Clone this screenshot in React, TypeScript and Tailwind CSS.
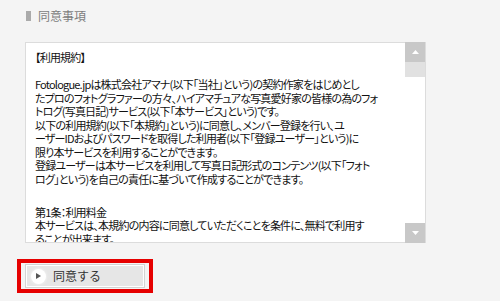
const terms: string[] = [
  "【利用規約】",
  "",
  "Fotologue.jpは株式会社アマナ(以下「当社」という)の契約作家をはじめとし",
  "たプロのフォトグラファーの方々、ハイアマチュアな写真愛好家の皆様の為のフォ",
  "トログ(写真日記)サービス(以下「本サービス」という)です。",
  "以下の利用規約(以下「本規約」という)に同意し、メンバー登録を行い、ユ",
  "ーザーIDおよびパスワードを取得した利用者(以下「登録ユーザー」という)に",
  "限り本サービスを利用することができます。",
  "登録ユーザーは本サービスを利用して写真日記形式のコンテンツ(以下「フォト",
  "ログ」という)を自己の責任に基づいて作成することができます。",
  "",
  "第1条：利用料金",
  "本サービスは、本規約の内容に同意していただくことを条件に、無料で利用す",
  "ることが出来ます。",
];

const Arrow = ({ dir }: { dir: "up" | "down" }) => (
  <svg width="7" height="4" viewBox="0 0 7 4" className="block">
    {dir === "up" ? (
      <polygon points="3.5,0 7,4 0,4" fill="#fff" />
    ) : (
      <polygon points="0,0 7,0 3.5,4" fill="#fff" />
    )}
  </svg>
);

export default function App() {
  return (
    <div className="w-[500px] h-[301px] bg-[#f4f4f4] overflow-hidden font-['Noto_Sans_CJK_JP',sans-serif]">
      {/* heading */}
      <div className="flex items-center pt-[7px] pl-[26px] h-[18px] box-content">
        <span className="w-[5px] h-[10px] bg-[#aaaaaa]" />
        <span className="ml-[7px] text-[12px] leading-[12px] text-[#7d7d7d]">同意事項</span>
      </div>

      {/* terms box */}
      <div className="ml-[25px] mt-[17px] w-[401px] h-[201px] border border-[#dcdcdc] bg-white flex">
        <div className="flex-1 overflow-hidden pl-[9px] pt-[8px] text-[11px] leading-[13.5px] tracking-[-0.8px] text-[#111] [font-feature-settings:'palt']">
          {terms.map((line, i) => (
            <div key={i} className={"whitespace-nowrap h-[13.5px]" + (i === 11 ? " mt-[6px]" : "")}>
              {line}
            </div>
          ))}
        </div>
        <div className="w-[20px] flex flex-col -mt-px -mb-px">
          <div className="h-[20px] bg-[#c8c8c8] flex items-center justify-center">
            <Arrow dir="up" />
          </div>
          <div className="h-[15px] bg-[#e1e1e1]" />
          <div className="flex-1 bg-white" />
          <div className="h-[20px] bg-[#c8c8c8] flex items-center justify-center">
            <Arrow dir="down" />
          </div>
        </div>
      </div>

      {/* agree button */}
      <div className="ml-[17px] mt-[16px] w-[136px] h-[34px] border-[4px] border-[#e60000] px-[4px] py-px">
        <button className="w-full h-full border border-[#d3d3d3] bg-[#e6e6e6] shadow-[inset_0_0_0_1px_#fff] flex items-center pl-[5px]">
          <span className="w-[15px] h-[15px] rounded-full bg-white shadow-[0_0_2px_1px_#f0f0f0] flex items-center justify-center">
            <svg width="5" height="6" viewBox="0 0 5 6">
              <polygon points="0,0 5,3 0,6" fill="#555" />
            </svg>
          </span>
          <span className="ml-[7px] text-[12px] leading-[12px] text-[#333]">同意する</span>
        </button>
      </div>
    </div>
  );
}
